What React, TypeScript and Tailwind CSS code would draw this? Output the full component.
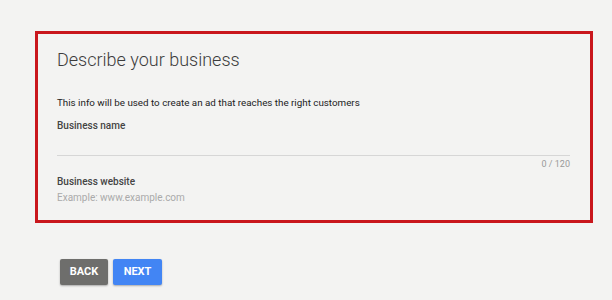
import React from "react";

const App = () => {
    return (
        <div className="w-[612px] h-[300px] bg-[#f3f3f2] font-['Roboto',sans-serif] overflow-hidden pt-[31px] pl-[35px]">
            {/* HIGHLIGHTED CARD */}
            <div className="w-[558px] h-[192px] border-[3px] border-[#c9171d] px-[19px] pt-[11px]">
                <h1 className="text-[18px] leading-[30px] font-light text-[#3c3c3c]">
                    Describe your business
                </h1>
                <p className="mt-[20px] text-[9.8px] leading-[16px] text-[#222]">
                    This info will be used to create an ad that reaches the right customers
                </p>
                <label className="block mt-[7px] text-[10px] leading-[16px] font-medium text-[#444]">
                    Business name
                </label>
                <div className="mt-[21px] w-[513px] border-b border-[#d6d6d6]"></div>
                <div className="w-[513px] text-right text-[9px] leading-[16px] text-[#999]">
                    0 / 120
                </div>
                <label className="block mt-[2px] text-[10px] leading-[16px] font-medium text-[#444]">
                    Business website
                </label>
                <div className="text-[10px] leading-[16px] text-[#aaa]">
                    Example: www.example.com
                </div>
            </div>

            {/* BUTTONS */}
            <div className="flex gap-[5px] mt-[36px] ml-[25px]">
                <button className="w-[48px] h-[26px] rounded-[2px] bg-[#6e6e6c] text-white text-[11px] font-bold shadow-[0_1px_2px_rgba(0,0,0,0.3)]">
                    BACK
                </button>
                <button className="w-[49px] h-[26px] rounded-[2px] bg-[#4285f4] text-white text-[11px] font-bold shadow-[0_1px_2px_rgba(0,0,0,0.3)]">
                    NEXT
                </button>
            </div>
        </div>
    );
};

export default App;
